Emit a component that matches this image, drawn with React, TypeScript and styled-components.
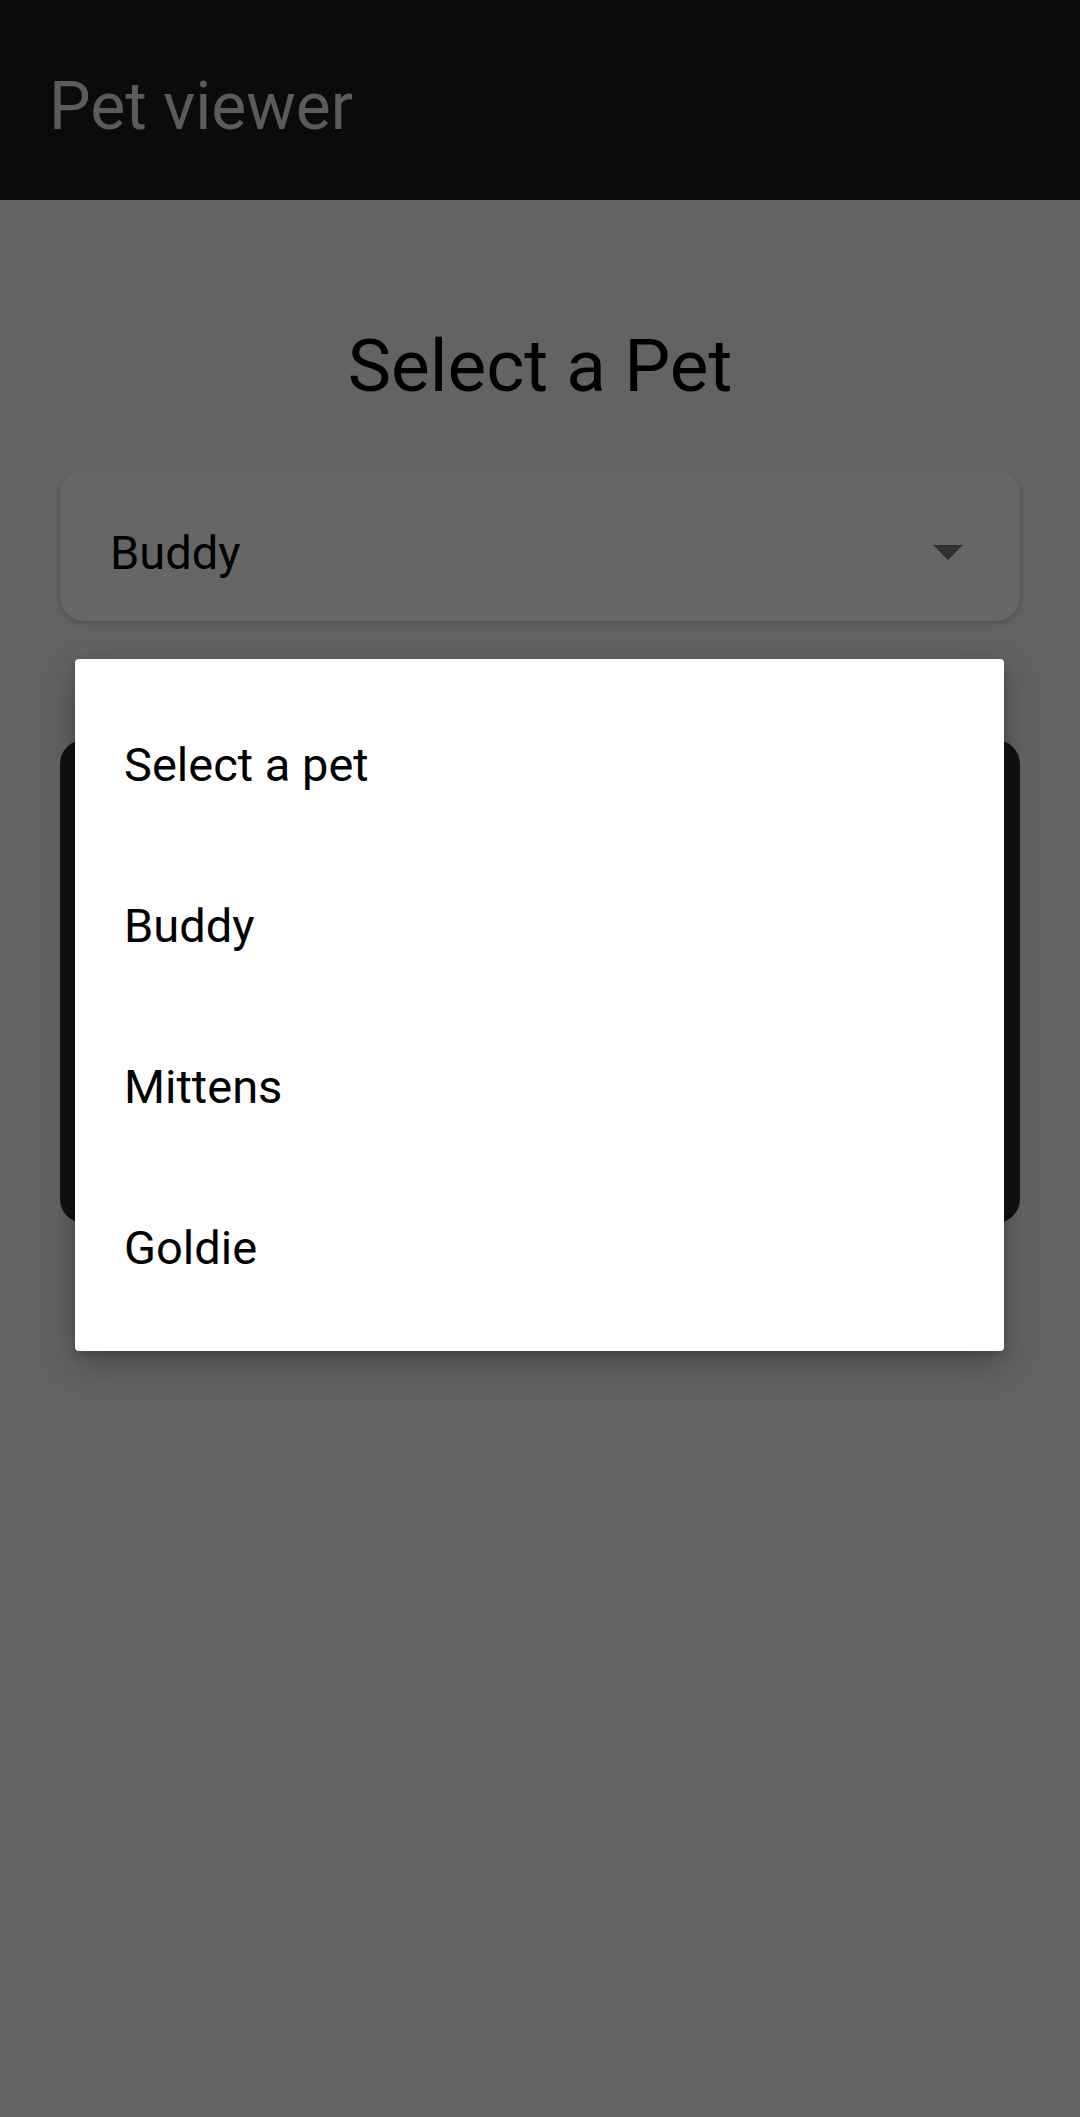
import React from "react";
import styled, { createGlobalStyle } from "styled-components";

const GlobalStyle = createGlobalStyle`
	html, body {
		margin: 0;
		padding: 0;
		background: #636363;
		font-family: Roboto, "Noto Sans", "Liberation Sans", sans-serif;
	}
	* {
		box-sizing: border-box;
	}
`;

const pets = ["Select a pet", "Buddy", "Mittens", "Goldie"];

export default function App() {
	return (
		<Page>
			<GlobalStyle />
			<AppBar>
				<AppTitle>Pet viewer</AppTitle>
			</AppBar>
			<Main>
				<Heading>Select a Pet</Heading>
				<SelectBox>
					<SelectValue>Buddy</SelectValue>
					<Arrow />
				</SelectBox>
				<PetCard />
				<Menu>
					{pets.map((p) => (
						<MenuItem key={p}>{p}</MenuItem>
					))}
				</Menu>
			</Main>
		</Page>
	);
}

const Page = styled.div`
	min-height: 2117px;
	background: #636363;
	display: flex;
	flex-direction: column;
`;

const AppBar = styled.header`
	height: 200px;
	background: #0b0b0b;
	display: flex;
	align-items: center;
	padding-left: 49px;
`;

const AppTitle = styled.div`
	font-size: 66px;
	line-height: 1;
	color: #5b5b5b;
	margin-top: 14px;
`;

const Main = styled.main`
	position: relative;
	display: flex;
	flex-direction: column;
	padding: 0 60px;
`;

const Heading = styled.h1`
	margin: 122px 0 0;
	font-size: 73px;
	font-weight: 400;
	line-height: 88px;
	text-align: center;
	color: #000;
`;

const SelectBox = styled.div`
	margin-top: 61px;
	height: 150px;
	border-radius: 24px;
	background: #666666;
	box-shadow: 0 3px 6px rgba(0, 0, 0, 0.18);
	display: flex;
	align-items: center;
	justify-content: space-between;
	padding: 0 57px 0 50px;
`;

const SelectValue = styled.span`
	font-size: 47px;
	color: #000;
	margin-top: 12px;
`;

const Arrow = styled.span`
	width: 0;
	height: 0;
	margin-top: 12px;
	border-left: 15px solid transparent;
	border-right: 15px solid transparent;
	border-top: 15px solid #2f2f2f;
`;

const PetCard = styled.div`
	margin-top: 119px;
	height: 483px;
	border-radius: 24px;
	background: #111113;
`;

const Menu = styled.ul`
	position: absolute;
	left: 75px;
	top: 459px;
	width: 929px;
	margin: 0;
	padding: 24px 0;
	list-style: none;
	background: #fff;
	border-radius: 4px;
	box-shadow: 0 12px 34px rgba(0, 0, 0, 0.28), 0 4px 10px rgba(0, 0, 0, 0.12);
`;

const MenuItem = styled.li`
	height: 161px;
	display: flex;
	align-items: center;
	padding-left: 49px;
	padding-top: 2px;
	font-size: 47px;
	color: #000;
`;
